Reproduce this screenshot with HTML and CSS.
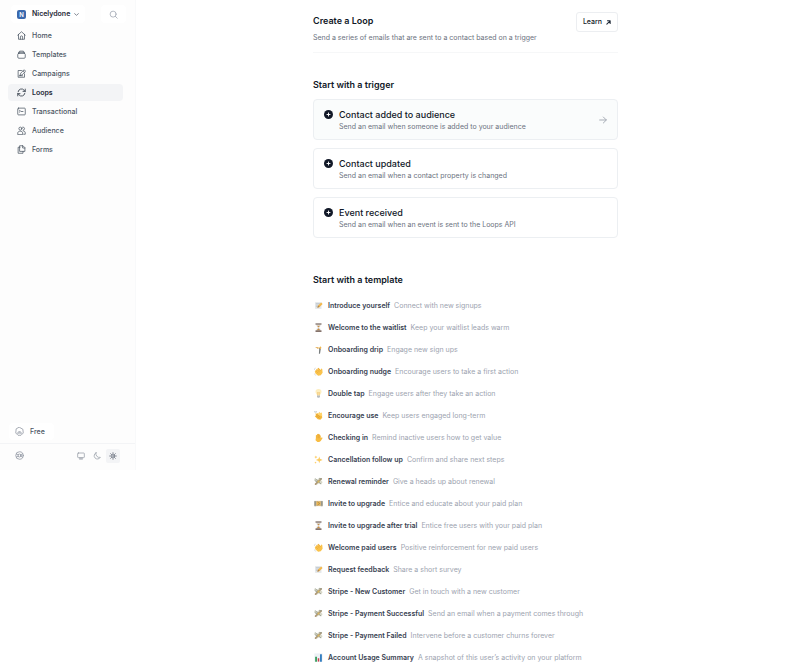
FILE: index.html
```html
<!DOCTYPE html>
<html lang="en">

<head>
    <meta charset="UTF-8">
    <meta name="viewport" content="width=device-width, initial-scale=1.0">
    <title>Create a Loop</title>
    <link rel="stylesheet" href="styles.css">
</head>

<body>
    <svg class="sprite" aria-hidden="true">
        <symbol id="memo" viewBox="0 0 24 24">
            <path d="M3 3h17v18H3z" fill="#e4e7ea"/>
            <path d="M6 7h9M6 11h7M6 15h4" stroke="#aab4bf" stroke-width="1.5"/>
            <path d="M9 18l2-6 8-8 4 4-8 8z" fill="#f3b84b"/>
            <path d="M9 18l2-6 4 4z" fill="#a7835b"/>
        </symbol>
        <symbol id="hourglass" viewBox="0 0 24 24">
            <path d="M6 3h12v3c0 3-4 5-4 6s4 3 4 6v3H6v-3c0-3 4-5 4-6S6 9 6 6z" fill="#e3e6e8"/>
            <path d="M8 7h8l-4 5zM12 14l5 5H7z" fill="#c98f45"/>
            <path d="M4 1h16v3H4zM4 20h16v3H4z" fill="#5d463d"/>
        </symbol>
        <symbol id="drip" viewBox="0 0 24 24">
            <path d="M3 5l11 2 3-4 3 4-3 5-3-2z" fill="#efb64f"/>
            <path d="M14 8l4 3-2 12h-3z" fill="#777c7d"/>
            <path d="M3 5l9 2-2 3z" fill="#d99836"/>
        </symbol>
        <symbol id="wave" viewBox="0 0 24 24">
            <path d="M4 10L7 5l4 3-2-4 3-2 6 6 1-4 3 1 1 10-5 7-7 1-7-6-2-5z" fill="#fac34c"/>
            <path d="M8 6l6 7M5 10l6 6M12 4l5 6" stroke="#df982f" stroke-width="1.2"/>
            <path d="M1 7l2-4M1 18l3 4" stroke="#b8bec5" stroke-width="1.5"/>
        </symbol>
        <symbol id="bulb" viewBox="0 0 24 24">
            <path d="M8 17c0-4-4-5-4-10a8 7 0 0 1 16 0c0 5-4 6-4 10z" fill="#fdeec0"/>
            <path d="M10 17V9l2 2 2-2v8" fill="none" stroke="#efb44e" stroke-width="1.5"/>
            <path d="M8 17h8v4l-2 2h-4l-2-2z" fill="#b8bdc0"/>
        </symbol>
        <symbol id="clap" viewBox="0 0 24 24">
            <path d="M4 5l4 3 1-3 12 7 1 6-5 5-7-1-8-8 3-2z" fill="#f6bb40"/>
            <path d="M10 10l4-8 3 3 4-1 1 10z" fill="#ffd46c"/>
            <path d="M7 9l9 7M6 13l8 6" stroke="#ce8825" stroke-width="1.3"/>
            <path d="M1 2l3 1M6 0v3" stroke="#94a0aa" stroke-width="1.5"/>
        </symbol>
        <symbol id="hand" viewBox="0 0 24 24">
            <path d="M5 13V6l3-1V3l3-1 2 1 3 1v2l2 1v7l3-3 2 2-5 8-4 3H9l-5-5z" fill="#f8bd44"/>
            <path d="M8 6v7M12 4v9M15 6v7" stroke="#df952c"/>
        </symbol>
        <symbol id="sparkles" viewBox="0 0 24 24">
            <path d="M14 4l2 6 7 3-7 3-2 6-2-6-7-3 7-3zM5 1l1 3 3 1-3 2-1 3-1-3-3-2 3-1zM4 17l1 2 2 1-2 1-1 2-1-2-2-1 2-1z" fill="#fccb61"/>
        </symbol>
        <symbol id="cash" viewBox="0 0 24 24">
            <path d="M1 4l9 2 4-4 8 1-3 7 4 3-4 7-7-3-6 5-4-2 4-7-5-4z" fill="#d8d8c8"/>
            <path d="M4 19L19 5" stroke="#b09a78" stroke-width="4"/>
            <path d="M4 5l14 13M15 4l5 1M3 10l5 3" stroke="#8f958b" stroke-width="2"/>
            <circle cx="12" cy="12" r="3" fill="#d6b55c"/>
        </symbol>
        <symbol id="ticket" viewBox="0 0 24 24">
            <path d="M1 5h22v14H1z" fill="#d9c29a"/>
            <path d="M1 5h5v14H1zM18 5h5v14h-5z" fill="#aaa99d"/>
            <path d="M7 7h10v10H7z" fill="#f0b547"/>
            <path d="M10 8l5 4-5 4M3 8v8M21 8v8" fill="none" stroke="#77756e" stroke-width="1.5"/>
        </symbol>
        <symbol id="chart" viewBox="0 0 24 24">
            <path d="M1 1h22v22H1z" fill="#edf1f5"/>
            <path d="M3 10h5v13H3z" fill="#3c9f62"/>
            <path d="M10 14h4v9h-4z" fill="#c8414b"/>
            <path d="M16 3h5v20h-5z" fill="#347ec0"/>
        </symbol>
        <symbol id="plus" viewBox="0 0 24 24">
            <circle cx="12" cy="12" r="12" fill="#111827"/>
            <path d="M12 8v8M8 12h8" stroke="#fff" stroke-width="2.5"/>
        </symbol>
    </svg>

    <div class="layout">
        <aside class="sidebar">
            <div class="workspace">
                <button class="team" type="button">
                    <span class="avatar">N</span>
                    Nicelydone
                    <svg class="chevron" viewBox="0 0 24 24"><path d="M3 8l9 8 9-8"/></svg>
                </button>
                <button class="search" type="button" aria-label="Search">
                    <svg class="icon" viewBox="0 0 24 24"><circle cx="11" cy="11" r="8"/><path d="M17 17l5 5"/></svg>
                </button>
            </div>

            <nav class="nav">
                <a href="#">
                    <svg class="icon" viewBox="0 0 24 24"><path d="M2 11L12 2l10 9M4 9v13h16V9M9 22v-6a3 3 0 0 1 6 0v6"/></svg>
                    Home
                </a>
                <a href="#">
                    <svg class="icon" viewBox="0 0 24 24"><rect x="2" y="9" width="20" height="13" rx="3"/><path d="M4 9V6h16v3M7 6V3h10v3"/></svg>
                    Templates
                </a>
                <a href="#">
                    <svg class="icon" viewBox="0 0 24 24"><path d="M12 4H3v18h17v-9M8 17l2-6 9-9 4 4-9 9zM16 5l4 4M6 18h9"/></svg>
                    Campaigns
                </a>
                <a class="active" href="#">
                    <svg class="icon" viewBox="0 0 24 24"><path d="M3 10a9 9 0 0 1 16-4l3 3M22 3v6h-6M21 14a9 9 0 0 1-16 4l-3-3M2 21v-6h6"/></svg>
                    Loops
                </a>
                <a href="#">
                    <svg class="icon" viewBox="0 0 24 24"><rect x="2" y="3" width="20" height="18" rx="2"/><path d="M6 8l3 3-3 3M11 12h5"/></svg>
                    Transactional
                </a>
                <a href="#">
                    <svg class="icon" viewBox="0 0 24 24"><circle cx="9" cy="7" r="4"/><path d="M2 22v-3c0-7 13-7 13 0v3zM15 3a4 4 0 0 1 2 8M16 13c4 0 6 2 6 6v3h-4"/></svg>
                    Audience
                </a>
                <a href="#">
                    <svg class="icon" viewBox="0 0 24 24"><path d="M8 2h8l5 5v10H8zM15 2v6h6M8 6H3v16h13v-5"/></svg>
                    Forms
                </a>
            </nav>

            <div class="plan">
                <a href="#">
                    <svg class="icon" viewBox="0 0 24 24"><path d="M12 1l9 5 1 10-6 6H8l-6-6L3 6z"/><path d="M7 17a5 5 0 1 1 10 0M10 17a2 2 0 1 1 4 0"/></svg>
                    Free
                </a>
            </div>

            <div class="tools">
                <button type="button" aria-label="Help">
                    <svg class="icon" viewBox="0 0 24 24"><circle cx="12" cy="12" r="10"/><circle cx="12" cy="12" r="4"/><path d="M4 8l5 2M20 8l-5 2M4 16l5-2M20 16l-5-2"/></svg>
                </button>
                <div class="themes">
                    <button type="button" aria-label="System theme">
                        <svg class="icon" viewBox="0 0 24 24"><rect x="2" y="3" width="20" height="14" rx="2"/><path d="M8 21h8M9 17v4M15 17v4"/></svg>
                    </button>
                    <button type="button" aria-label="Dark theme">
                        <svg class="icon" viewBox="0 0 24 24"><path d="M9 2a10 10 0 1 0 13 14A11 11 0 0 1 9 2z"/></svg>
                    </button>
                    <button class="selected" type="button" aria-label="Light theme">
                        <svg class="icon" viewBox="0 0 24 24"><circle cx="12" cy="12" r="4"/><path d="M12 2v4M12 18v4M2 12h4M18 12h4M5 5l3 3M16 16l3 3M5 19l3-3M16 8l3-3"/></svg>
                    </button>
                </div>
            </div>
        </aside>

        <main class="main">
            <div class="content">
                <header class="header">
                    <div>
                        <h1>Create a Loop</h1>
                        <p>Send a series of emails that are sent to a contact based on a trigger</p>
                    </div>
                    <a class="learn" href="#">
                        Learn
                        <svg viewBox="0 0 24 24"><path d="M4 20L20 4M7 4h13v13"/></svg>
                    </a>
                </header>

                <section class="triggers">
                    <h2>Start with a trigger</h2>
                    <a class="card highlighted" href="#">
                        <svg class="plus"><use href="#plus"/></svg>
                        <div class="card-text">
                            <h3>Contact added to audience</h3>
                            <p>Send an email when someone is added to your audience</p>
                        </div>
                        <svg class="arrow" viewBox="0 0 24 24"><path d="M2 12h20M13 3l9 9-9 9"/></svg>
                    </a>
                    <a class="card" href="#">
                        <svg class="plus"><use href="#plus"/></svg>
                        <div class="card-text">
                            <h3>Contact updated</h3>
                            <p>Send an email when a contact property is changed</p>
                        </div>
                    </a>
                    <a class="card" href="#">
                        <svg class="plus"><use href="#plus"/></svg>
                        <div class="card-text">
                            <h3>Event received</h3>
                            <p>Send an email when an event is sent to the Loops API</p>
                        </div>
                    </a>
                </section>

                <section class="templates">
                    <h2>Start with a template</h2>
                    <ul>
                        <li><a href="#"><svg><use href="#memo"/></svg><b>Introduce yourself</b><span>Connect with new signups</span></a></li>
                        <li><a href="#"><svg><use href="#hourglass"/></svg><b>Welcome to the waitlist</b><span>Keep your waitlist leads warm</span></a></li>
                        <li><a href="#"><svg><use href="#drip"/></svg><b>Onboarding drip</b><span>Engage new sign ups</span></a></li>
                        <li><a href="#"><svg><use href="#wave"/></svg><b>Onboarding nudge</b><span>Encourage users to take a first action</span></a></li>
                        <li><a href="#"><svg><use href="#bulb"/></svg><b>Double tap</b><span>Engage users after they take an action</span></a></li>
                        <li><a href="#"><svg><use href="#clap"/></svg><b>Encourage use</b><span>Keep users engaged long-term</span></a></li>
                        <li><a href="#"><svg><use href="#hand"/></svg><b>Checking in</b><span>Remind inactive users how to get value</span></a></li>
                        <li><a href="#"><svg><use href="#sparkles"/></svg><b>Cancellation follow up</b><span>Confirm and share next steps</span></a></li>
                        <li><a href="#"><svg><use href="#cash"/></svg><b>Renewal reminder</b><span>Give a heads up about renewal</span></a></li>
                        <li><a href="#"><svg><use href="#ticket"/></svg><b>Invite to upgrade</b><span>Entice and educate about your paid plan</span></a></li>
                        <li><a href="#"><svg><use href="#hourglass"/></svg><b>Invite to upgrade after trial</b><span>Entice free users with your paid plan</span></a></li>
                        <li><a href="#"><svg><use href="#wave"/></svg><b>Welcome paid users</b><span>Positive reinforcement for new paid users</span></a></li>
                        <li><a href="#"><svg><use href="#memo"/></svg><b>Request feedback</b><span>Share a short survey</span></a></li>
                        <li><a href="#"><svg><use href="#cash"/></svg><b>Stripe - New Customer</b><span>Get in touch with a new customer</span></a></li>
                        <li><a href="#"><svg><use href="#cash"/></svg><b>Stripe - Payment Successful</b><span>Send an email when a payment comes through</span></a></li>
                        <li><a href="#"><svg><use href="#cash"/></svg><b>Stripe - Payment Failed</b><span>Intervene before a customer churns forever</span></a></li>
                        <li><a href="#"><svg><use href="#chart"/></svg><b>Account Usage Summary</b><span>A snapshot of this user’s activity on your platform</span></a></li>
                    </ul>
                </section>
            </div>
        </main>
    </div>
</body>

</html>
```
FILE: styles.css
```css
* {
    box-sizing: border-box;
}

body {
    font-family: 'Inter', sans-serif;
    font-size: 7px;
    line-height: 10px;
    color: #111827;
    background-color: #fff;
    margin: 0;
}

h1, h2, h3, p, ul {
    margin: 0;
    padding: 0;
}

a {
    color: inherit;
    text-decoration: none;
}

button {
    font: inherit;
    color: inherit;
    border: none;
    padding: 0;
    background: none;
    cursor: pointer;
}

svg {
    flex-shrink: 0;
    fill: none;
    stroke-linecap: round;
    stroke-linejoin: round;
}

.sprite {
    position: absolute;
    width: 0;
    height: 0;
}

.layout {
    display: flex;
    align-items: flex-start;
}

.icon {
    display: block;
    width: 9px;
    height: 9px;
    stroke: currentColor;
    stroke-width: 2;
}

/* Sidebar */
.sidebar {
    display: flex;
    flex-direction: column;
    flex: 0 0 136px;
    min-height: 470px;
    padding-top: 5px;
    background-color: #fdfdfd;
    border-right: 1px solid #f8f9fa;
    color: #4b5563;
}

.workspace {
    display: flex;
    justify-content: space-between;
    padding: 0 9px 0 11px;
}

.team {
    display: flex;
    align-items: center;
    height: 18px;
    padding: 0 6px;
    background-color: #fff;
    border-radius: 4px;
    font-weight: 600;
    color: #1f2937;
}

.avatar {
    width: 9px;
    height: 9px;
    margin-right: 6px;
    border-radius: 2px;
    background-color: #3b69ad;
    color: #fff;
    font-size: 6px;
    line-height: 9px;
}

.chevron {
    width: 5px;
    height: 5px;
    margin-left: 4px;
    stroke: #6b7280;
    stroke-width: 4;
}

.search {
    display: grid;
    place-items: center;
    width: 25px;
    height: 18px;
    background-color: #fff;
    border-radius: 4px;
    color: #9ca3af;
}

.nav {
    display: flex;
    flex-direction: column;
    gap: 2px;
    padding: 4px 12px 0 8px;
}

.nav a {
    display: flex;
    align-items: center;
    gap: 6px;
    height: 17px;
    padding: 0 9px;
    border-radius: 4px;
    font-weight: 500;
}

.nav .active {
    background-color: #f3f4f6;
    color: #1f2937;
    font-weight: 600;
}

.plan {
    margin-top: auto;
    padding: 0 9px 3px;
}

.plan a {
    display: inline-flex;
    align-items: center;
    gap: 6px;
    height: 17px;
    padding: 0 9px 0 6px;
    background-color: #fff;
    border-radius: 4px;
    font-weight: 500;
}

.plan .icon {
    stroke: #8b929d;
}

.tools {
    display: flex;
    align-items: center;
    justify-content: space-between;
    height: 27px;
    padding: 0 15px 3px;
    border-top: 1px solid #f3f4f6;
    color: #8b929d;
}

.themes {
    display: flex;
    gap: 2px;
}

.themes button {
    display: grid;
    place-items: center;
    width: 14px;
    height: 14px;
    border-radius: 2px;
}

.themes .icon {
    width: 8px;
    height: 8px;
}

.themes .selected {
    background-color: #f3f4f6;
    color: #4b5563;
}

/* Content */
.main {
    flex: 1;
    padding: 12px 5px 0 0;
}

.content {
    max-width: 305px;
    margin: 0 auto;
}

.header {
    display: flex;
    align-items: flex-start;
    justify-content: space-between;
    height: 41px;
    border-bottom: 1px solid #f6f7f8;
}

h1, h2 {
    font-size: 9px;
    line-height: 18px;
    font-weight: 600;
}

.header p {
    line-height: 16px;
    color: #6b7280;
}

.learn {
    display: flex;
    align-items: center;
    gap: 4px;
    height: 20px;
    padding: 0 6px;
    border: 1px solid #eceef1;
    border-radius: 3px;
    font-weight: 500;
}

.learn svg {
    width: 5px;
    height: 5px;
    stroke: #1f2937;
    stroke-width: 5;
}

.triggers {
    display: flex;
    flex-direction: column;
    gap: 8px;
    padding-top: 23px;
}

.triggers h2 {
    margin-bottom: -3px;
}

.card {
    display: flex;
    align-items: flex-start;
    height: 41px;
    padding: 10px;
    border: 1px solid #eceff2;
    border-radius: 4px;
}

.card.highlighted {
    background-color: #fafcfc;
}

.plus {
    width: 9px;
    height: 9px;
    margin-right: 6px;
}

.card-text {
    flex: 1;
}

.card h3 {
    font-size: 9px;
    line-height: 10px;
    font-weight: 500;
}

.card p {
    margin-top: 2px;
    color: #6b7280;
}

.arrow {
    align-self: center;
    width: 8px;
    height: 8px;
    stroke: #a7adb6;
    stroke-width: 3;
}

.templates {
    padding-top: 33px;
}

.templates ul {
    padding-top: 6px;
    list-style: none;
}

.templates a {
    display: flex;
    align-items: center;
    height: 22px;
}

.templates svg {
    width: 9px;
    height: 9px;
    margin: 0 5px 2px 1px;
}

.templates b {
    margin-right: 4px;
    font-weight: 600;
    color: #374151;
}

.templates span {
    color: #9ca3af;
}
```
